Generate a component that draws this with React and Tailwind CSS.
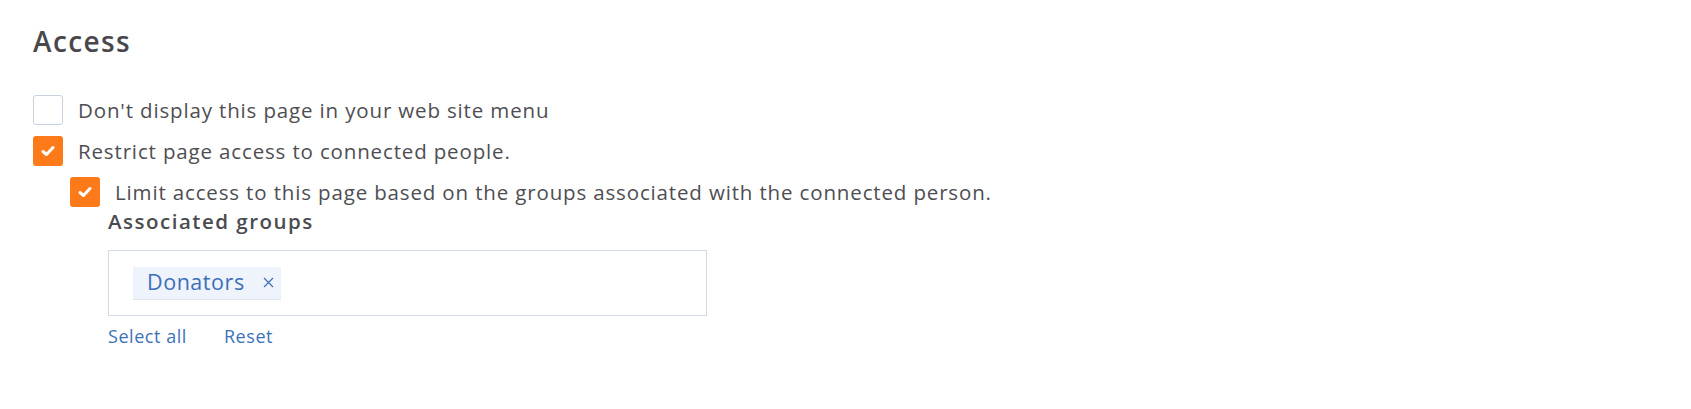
import React, { useState } from "react";

function Check({ checked, onChange }) {
  return (
    <button
      type="button"
      onClick={onChange}
      className={
        "w-[30px] h-[30px] shrink-0 rounded-[3px] flex items-center justify-center " +
        (checked ? "bg-[#fd7a1a]" : "bg-white border border-[#c8d2df]")
      }
    >
      {checked && (
        <svg width="14" height="12" viewBox="0 0 14 12">
          <path d="M2 6.5 L5.5 9.5 L12 2.5" fill="none" stroke="white" strokeWidth="3" strokeLinecap="round" strokeLinejoin="round" />
        </svg>
      )}
    </button>
  );
}

export default function App() {
  const [hide, setHide] = useState(false);
  const [restrict, setRestrict] = useState(true);
  const [limit, setLimit] = useState(true);
  const [groups, setGroups] = useState(["Donators"]);

  return (
    <div className="w-[1691px] h-[409px] bg-white text-[#4e4e52] pl-[33px] pt-[23px] font-['Open_Sans',sans-serif] tracking-[0.85px]">
      <h2 className="text-[28px] leading-[36px] font-semibold text-[#48484c] tracking-[1.4px]">Access</h2>

      <div className="mt-[36px] flex flex-col gap-[11px]">
        <label className="flex items-center gap-[15px] text-[20.5px] leading-[30px]">
          <Check checked={hide} onChange={() => setHide(!hide)} />
          <span>Don't display this page in your web site menu</span>
        </label>
        <label className="flex items-center gap-[15px] text-[20.5px] leading-[30px]">
          <Check checked={restrict} onChange={() => setRestrict(!restrict)} />
          <span>Restrict page access to connected people.</span>
        </label>
      </div>

      <div className="pl-[37px] mt-[11px]">
        <label className="flex items-center gap-[15px] text-[20.5px] leading-[30px]">
          <Check checked={limit} onChange={() => setLimit(!limit)} />
          <span>Limit access to this page based on the groups associated with the connected person.</span>
        </label>

        <div className="pl-[38px]">
          <div className="-mt-[1px] text-[20.5px] leading-[30px] font-semibold text-[#4b4b4f] tracking-[1.5px]">Associated groups</div>
          <div className="mt-[14px] w-[599px] h-[66px] border border-[#d3dbe6] flex items-center px-[24px]">
            {groups.map((g) => (
              <span
                key={g}
                className="h-[33px] flex items-center gap-[18px] bg-[#eef3fc] border-b border-[#dfe6f1] pl-[14px] pr-[7px] text-[21.5px] text-[#3d6fb6] tracking-[0.55px]"
              >
                {g}
                <button type="button" onClick={() => setGroups(groups.filter((x) => x !== g))}>
                  <svg width="11" height="11" viewBox="0 0 11 11">
                    <path d="M1 1 L10 10 M10 1 L1 10" stroke="#3d6fb6" strokeWidth="1.2" />
                  </svg>
                </button>
              </span>
            ))}
          </div>
          <div className="mt-[8px] flex gap-[37px] text-[18px] leading-[24px] text-[#3d72b8] tracking-[0.55px]">
            <button type="button" onClick={() => setGroups(["Donators"])}>Select all</button>
            <button type="button" onClick={() => setGroups([])}>Reset</button>
          </div>
        </div>
      </div>
    </div>
  );
}
